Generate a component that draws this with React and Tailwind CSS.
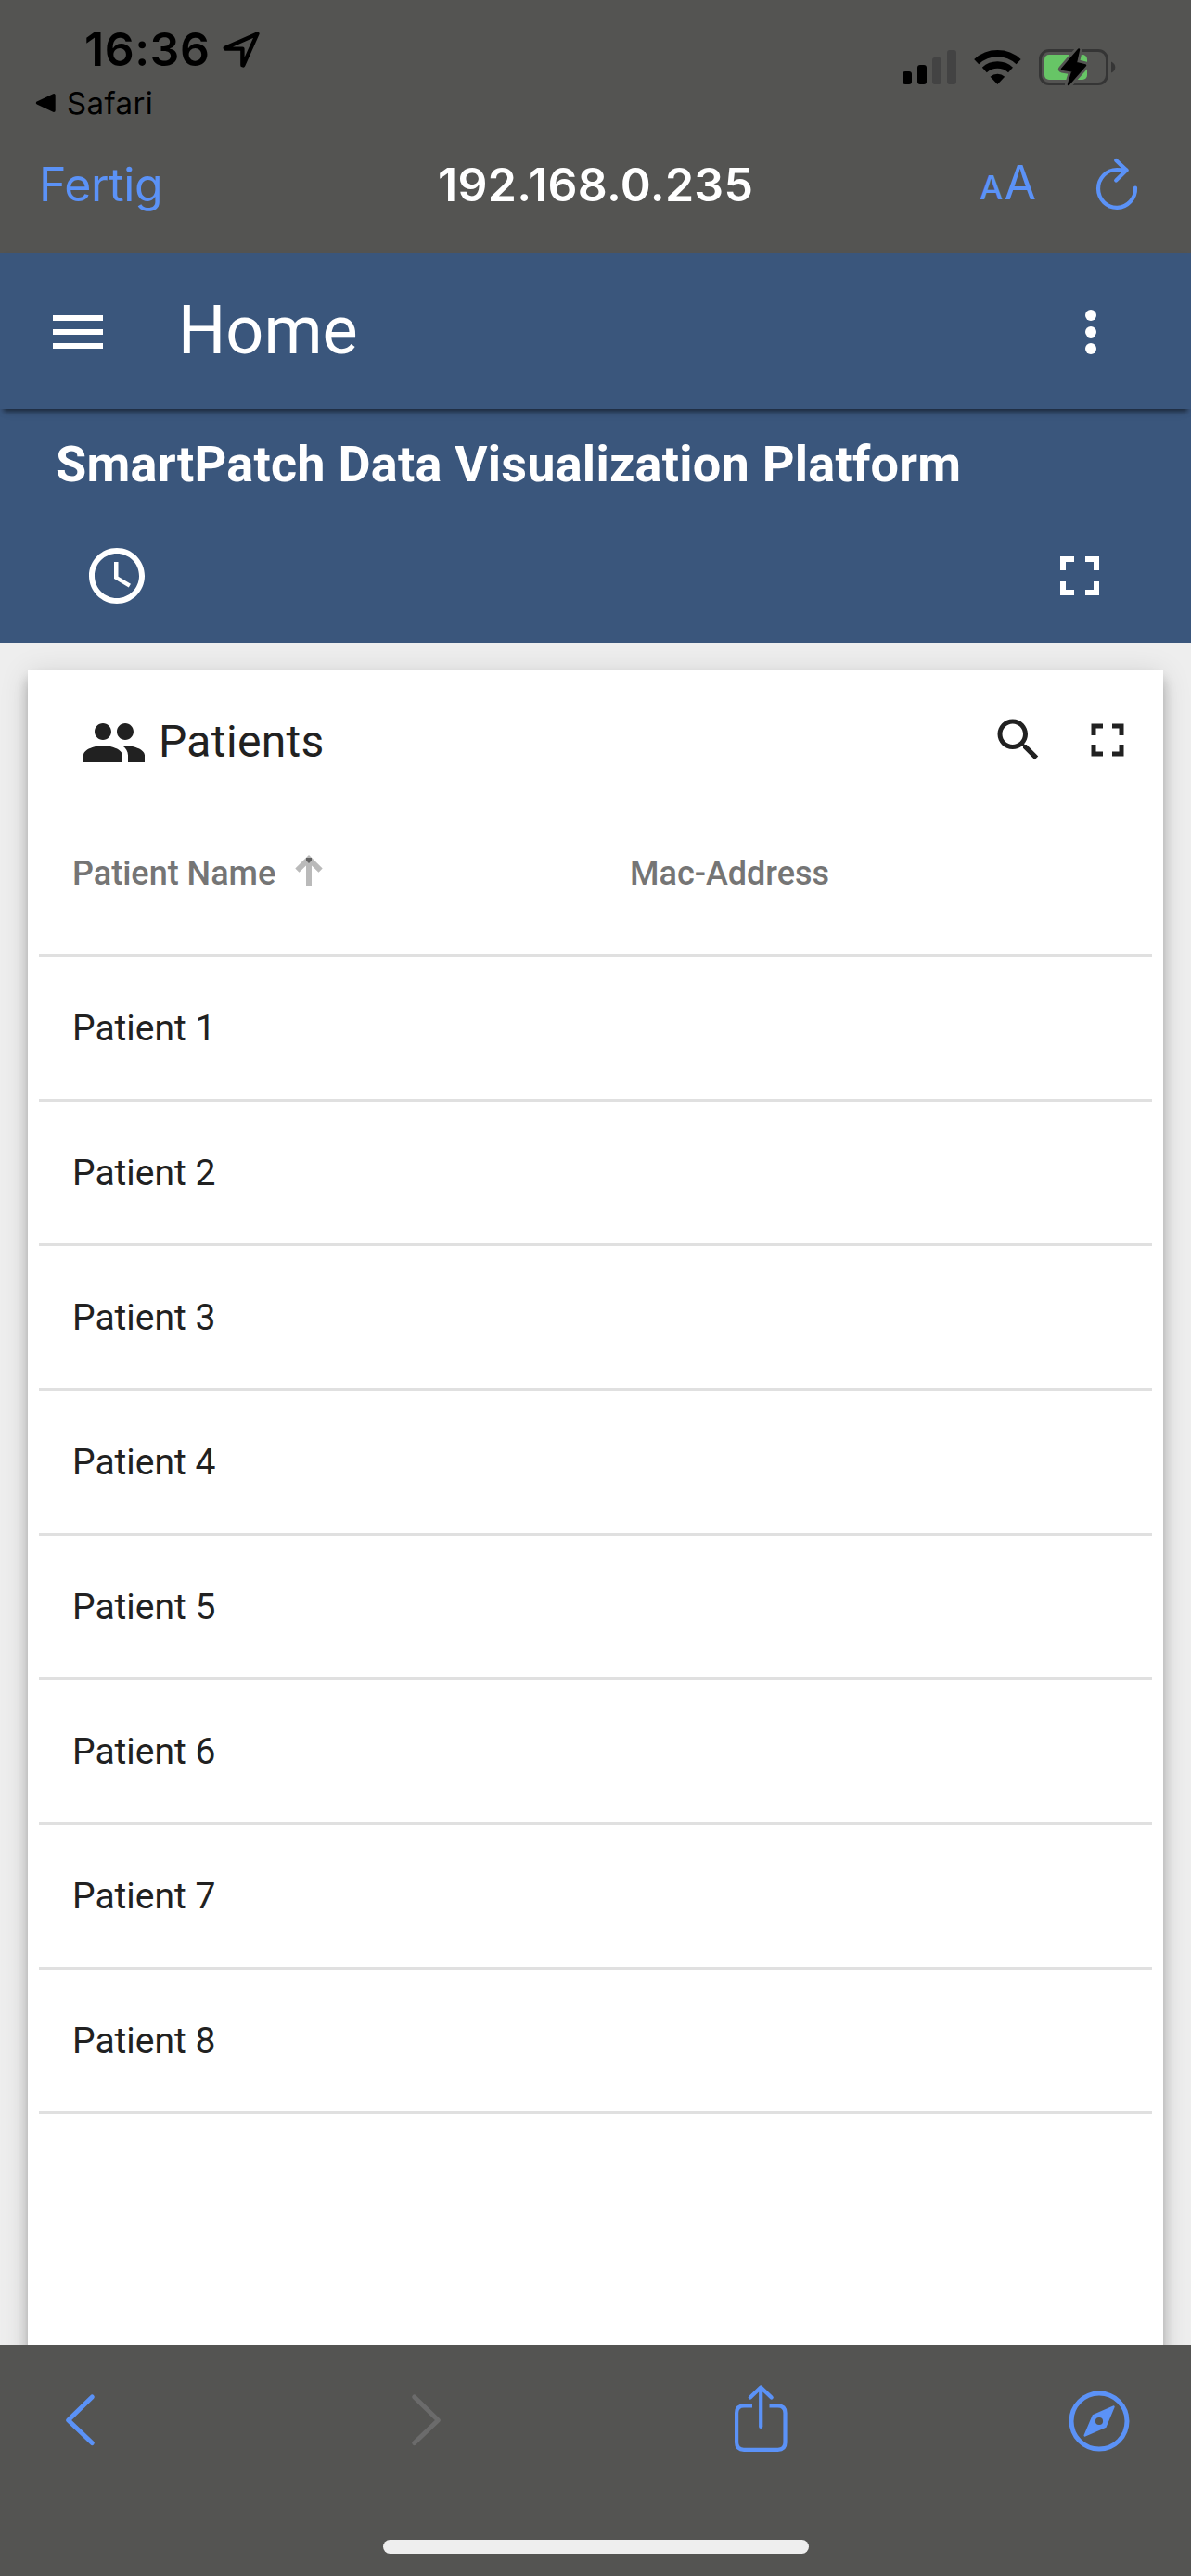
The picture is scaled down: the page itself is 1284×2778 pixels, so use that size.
const BLUE = '#5b92f7';

function StatusBar() {
  return (
    <div className="flex h-[131px] justify-between">
      <div className="flex flex-col pt-[23px]">
        <div className="flex h-[60px] items-center pl-[91px]">
          <span className="text-[50px] leading-[60px] font-semibold tracking-[0.5px] text-black">16:36</span>
          <svg className="mt-[1px] ml-[12px]" width="46" height="46" viewBox="238 31 46 46" fill="none">
            <path d="M277.4 36.4 L242.8 51.8 L243.2 52.6 H261.4 V70.2 L262.2 70.4 Z" stroke="#000" strokeWidth="4.4" strokeLinejoin="round" />
          </svg>
        </div>
        <div className="mt-[8px] flex h-[40px] items-center pl-[37px]">
          <svg width="25" height="24" viewBox="0 0 25 24">
            <path d="M3.5 12 L21 3.7 V20.3 Z" fill="#000" stroke="#000" strokeWidth="3.4" strokeLinejoin="round" />
          </svg>
          <span className="ml-[10px] text-[33px] leading-[40px] tracking-[0.4px] text-black">Safari</span>
        </div>
      </div>
      <svg className="mt-[48px] mr-[80px]" width="234" height="50" viewBox="970 48 234 50" fill="none">
        <rect x="973" y="77" width="10" height="14" rx="3" fill="#000" />
        <rect x="989" y="70" width="10" height="21" rx="3" fill="#000" />
        <rect x="1005" y="62" width="10" height="29" rx="3" fill="#434343" />
        <rect x="1021" y="54" width="10" height="37" rx="3" fill="#434343" />
        <g stroke="#000" strokeWidth="7.4">
          <path d="M1052.7 66.6 A33.3 33.3 0 0 1 1098.1 66.6" />
          <path d="M1061.3 75.4 A21 21 0 0 1 1089.5 75.4" />
        </g>
        <path d="M1075.4 91 L1067.6 82.8 A11.7 11.7 0 0 1 1083.2 82.8 Z" fill="#000" />
        <rect x="1121.5" y="54.5" width="72" height="36" rx="9.5" stroke="#353535" strokeWidth="3" />
        <path d="M1198 66.5 Q1202.3 68.5 1202.3 72.5 T1198 78.5 Z" fill="#353535" />
        <rect x="1126" y="59" width="46" height="27" rx="5" fill="#67c566" />
        <path d="M1163 53.5 L1145 74.5 L1156.5 76.5 L1152 91 L1170 70.5 L1159.8 68 Z" fill="#545452" stroke="#545452" strokeWidth="8" strokeLinejoin="round" />
        <path d="M1163 53.5 L1145 74.5 L1156.5 76.5 L1152 91 L1170 70.5 L1159.8 68 Z" fill="#000" stroke="#000" strokeWidth="2.5" strokeLinejoin="round" />
      </svg>
    </div>
  );
}

function BrowserBar() {
  return (
    <div className="grid h-[135px] grid-cols-[472px_339px_1fr] items-center text-[50px] leading-[60px]">
      <span className="pl-[42px] tracking-[-0.36px] text-[#5b92f7]">Fertig</span>
      <span className="font-semibold tracking-[0.3px] whitespace-nowrap text-white">192.168.0.235</span>
      <div className="flex items-center pl-[245px] text-[#5b92f7]">
        <div className="flex items-baseline pt-[2px]">
          <span className="text-[36px] leading-[60px] font-medium tracking-[1px]">A</span>
          <span className="w-[34px] text-[50px] leading-[60px]">A</span>
        </div>
        <svg className="-mt-[3px] ml-[61px]" width="54" height="60" viewBox="1178 167 54 60" fill="none" stroke={BLUE} strokeWidth="4.2" strokeLinecap="round" strokeLinejoin="round">
          <path d="M1224 202.5 A20 20.4 0 1 1 1204 183 L1214.5 183.6" />
          <path d="M1203.2 173 L1214.5 183.6 L1203.2 194.5" />
        </svg>
      </div>
    </div>
  );
}

function Fullscreen({ className }) {
  return (
    <svg className={className} viewBox="0 0 24 24" fill="currentColor">
      <path d="M7 14H5v5h5v-2H7v-3zm-2-4h2V7h3V5H5v5zm12 7h-3v2h5v-5h-2v3zM14 5v2h3v3h2V5h-5z" />
    </svg>
  );
}

function Toolbar() {
  return (
    <div className="relative z-10 flex h-[168px] items-center bg-[#3a567c] pr-[72px] pl-[48px] text-white shadow-[0_7px_5px_-4px_rgba(0,0,0,0.5),0_5px_14px_-4px_rgba(0,0,0,0.08)]">
      <svg className="mt-[2px] size-[72px]" viewBox="0 0 24 24" fill="currentColor">
        <path d="M3 18h18v-2H3v2zm0-5h18v-2H3v2zm0-7v2h18V6H3z" />
      </svg>
      <h1 className="ml-[72px] text-[72px] leading-[84px] font-normal">Home</h1>
      <svg className="mt-[2px] ml-auto size-[72px]" viewBox="0 0 24 24" fill="currentColor">
        <circle cx="12" cy="6" r="2" />
        <circle cx="12" cy="12" r="2" />
        <circle cx="12" cy="18" r="2" />
      </svg>
    </div>
  );
}

function DashboardHeader() {
  return (
    <div className="h-[252px] bg-[#3a567c] text-white">
      <h2 className="pt-[30px] pl-[60px] text-[54px] leading-[60px] font-bold tracking-[0.24px] whitespace-nowrap">
        SmartPatch Data Visualization Platform
      </h2>
      <div className="mt-[54px] flex justify-between pr-[84px] pl-[90px]">
        <svg className="size-[72px]" viewBox="0 0 24 24" fill="currentColor">
          <path d="M11.99 2C6.47 2 2 6.48 2 12s4.47 10 9.99 10C17.52 22 22 17.52 22 12S17.52 2 11.99 2zM12 20c-4.42 0-8-3.58-8-8s3.58-8 8-8 8 3.58 8 8-3.58 8-8 8zm.5-13H11v6l5.25 3.15.75-1.23-4.5-2.67z" />
        </svg>
        <Fullscreen className="size-[72px]" />
      </div>
    </div>
  );
}

const PATIENTS = ['Patient 1', 'Patient 2', 'Patient 3', 'Patient 4', 'Patient 5', 'Patient 6', 'Patient 7', 'Patient 8'];

function PatientsCard() {
  return (
    <div className="h-[1900px] bg-white px-[12px] text-[#212121] shadow-[0_6px_12px_-3px_rgba(0,0,0,0.2),0_12px_15px_0_rgba(0,0,0,0.14),0_3px_30px_0_rgba(0,0,0,0.12)]">
      <div className="flex h-[156px] items-center pr-[18px] pl-[45px]">
        <svg className="size-[72px]" viewBox="0 0 24 24" fill="currentColor">
          <path d="M16 11c1.66 0 2.99-1.34 2.99-3S17.66 5 16 5c-1.66 0-3 1.34-3 3s1.34 3 3 3zm-8 0c1.66 0 2.99-1.34 2.99-3S9.66 5 8 5C6.34 5 5 6.34 5 8s1.34 3 3 3zm0 2c-2.33 0-7 1.17-7 3.5V19h14v-2.5c0-2.33-4.67-3.5-7-3.5zm8 0c-.29 0-.62.02-.97.05 1.16.84 1.97 1.97 1.97 3.45V19h6v-2.5c0-2.33-4.67-3.5-7-3.5z" />
        </svg>
        <h3 className="-mt-[2px] ml-[12px] text-[48px] leading-[60px] font-normal tracking-[0.35px]">Patients</h3>
        <svg className="-mt-[6px] ml-auto size-[60px]" viewBox="0 0 24 24" fill="currentColor">
          <path d="M15.5 14h-.79l-.28-.27C15.41 12.59 16 11.11 16 9.5 16 5.91 13.09 3 9.5 3S3 5.91 3 9.5 5.91 16 9.5 16c1.61 0 3.09-.59 4.23-1.57l.27.28v.79l5 4.99L20.49 19l-4.99-5zm-6 0C7.01 14 5 11.99 5 9.5S7.01 5 9.5 5 14 7.01 14 9.5 11.99 14 9.5 14z" />
        </svg>
        <Fullscreen className="-mt-[6px] ml-[36px] size-[60px]" />
      </div>
      <div className="grid h-[153px] grid-cols-2 border-b-[3px] border-[#e0e0e0] pt-[33px] text-[36px] leading-[60px] font-medium text-[#757575]">
        <div className="flex pl-[36px]">
          Patient Name
          <svg className="mt-[6px] ml-[18px]" width="36" height="40" viewBox="0 0 36 40">
            <path d="M15 10h6v28h-6z" fill="#bababa" />
            <path d="M18 4 L32.7 18.6 L28.5 22.8 L18 12.4 L7.5 22.8 L3.3 18.6 Z" fill="#bababa" />
            <path d="M15 7h6v3l-3 3l-3-3z" fill="#626262" />
          </svg>
        </div>
        <div className="pl-[37px]">Mac-Address</div>
      </div>
      {PATIENTS.map((name) => (
        <div key={name} className="grid h-[156px] grid-cols-2 items-center border-b-[3px] border-[#e0e0e0] text-[39px] leading-[48px]">
          <span className="pl-[36px]">{name}</span>
          <span />
        </div>
      ))}
    </div>
  );
}

function BottomBar() {
  return (
    <div className="h-[249px] bg-[#545452]">
      <div className="flex h-[162px] items-center pl-[68px]">
        <svg width="38" height="60" viewBox="0 0 38 60" fill="none" stroke={BLUE} strokeWidth="5" strokeLinecap="round" strokeLinejoin="round">
          <path d="M31.3 5 L5.6 30 L31.3 54.5" />
        </svg>
        <svg className="ml-[334px]" width="38" height="60" viewBox="0 0 38 60" fill="none" stroke="#6b6b6b" strokeWidth="5" strokeLinecap="round" strokeLinejoin="round">
          <path d="M6.7 5 L32.4 30 L6.7 54.5" />
        </svg>
        <svg className="ml-[312px]" width="60" height="80" viewBox="790 2570 60 80" fill="none" stroke={BLUE} strokeWidth="4.2">
          <path d="M811 2594.4 H802 Q794.1 2594.4 794.1 2602.3 V2634 Q794.1 2641.8 802 2641.8 H838.6 Q846.5 2641.8 846.5 2634 V2602.3 Q846.5 2594.4 838.6 2594.4 H829.5" />
          <path d="M820.2 2617 V2575 M808.8 2585.6 L820.2 2574.4 L831.7 2585.6" strokeLinecap="round" strokeLinejoin="round" />
        </svg>
        <svg className="mt-[1px] ml-[300px]" width="70" height="70" viewBox="1150.5 2575.5 70 70" fill="none">
          <circle cx="1185.5" cy="2610.5" r="30" stroke={BLUE} strokeWidth="5" />
          <path d="M1201 2595 L1192 2616.5 L1170.2 2626 L1179.3 2604.5 Z" fill={BLUE} stroke={BLUE} strokeWidth="2.4" strokeLinejoin="round" />
          <circle cx="1185.5" cy="2610.5" r="4.1" fill="#545452" />
        </svg>
      </div>
      <div className="mx-auto mt-[48px] h-[15px] w-[459px] rounded-full bg-[#eeeeee]" />
    </div>
  );
}

export default function App() {
  return (
    <div className="flex h-[2778px] w-[1284px] flex-col overflow-hidden bg-[#eeeeee] font-['Roboto',sans-serif]">
      <header className="h-[273px] shrink-0 bg-[#545452] font-['Inter',sans-serif]">
        <StatusBar />
        <BrowserBar />
      </header>
      <Toolbar />
      <DashboardHeader />
      <main className="h-[1836px] shrink-0 overflow-hidden px-[30px] pt-[30px]">
        <PatientsCard />
      </main>
      <footer className="shrink-0 font-['Inter',sans-serif]">
        <BottomBar />
      </footer>
    </div>
  );
}
